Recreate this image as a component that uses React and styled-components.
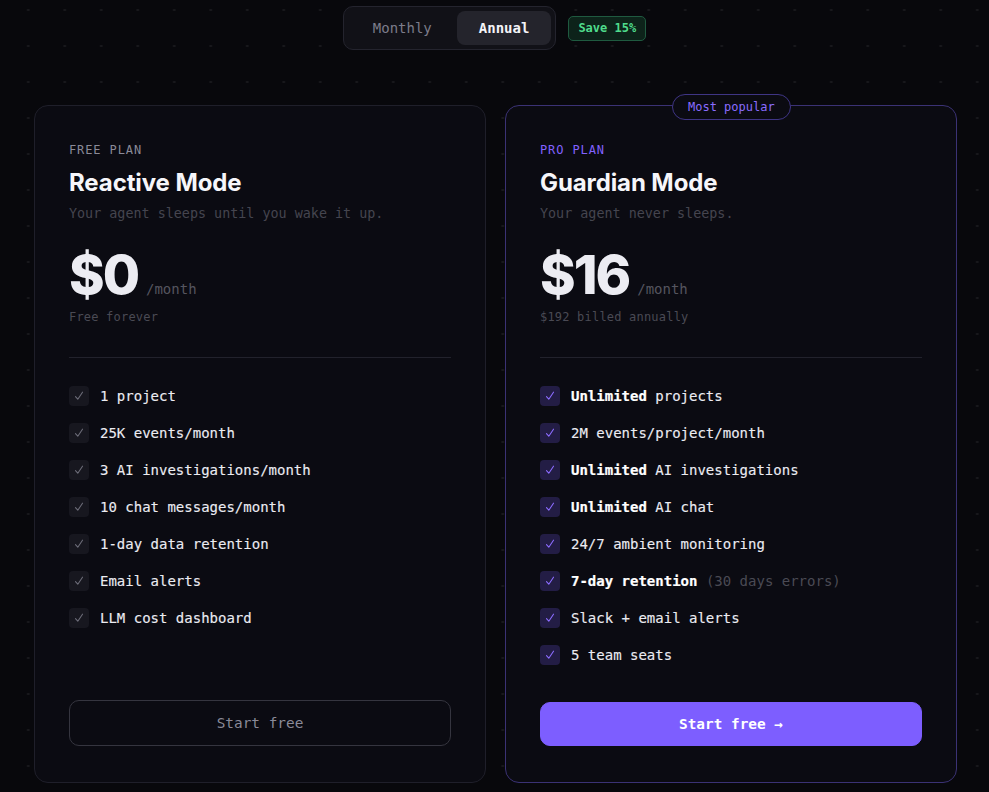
import styled, { createGlobalStyle } from 'styled-components';

const GlobalStyle = createGlobalStyle`
  html, body {
    margin: 0;
    padding: 0;
    background-color: #08080c;
  }
  body {
    min-height: 792px;
    background-image: radial-gradient(rgba(255, 255, 255, 0.07) 1px, transparent 1.4px);
    background-size: 36.5px 36px;
    background-position: 10px -8px;
    font-family: "DejaVu Sans Mono", "Liberation Mono", monospace;
    color: #e8e8f0;
  }
`;

const Page = styled.div`
  padding: 6px 0 0 2px;
  display: flex;
  flex-direction: column;
  align-items: center;
`;

const ToggleRow = styled.div`
  display: flex;
  align-items: center;
  gap: 12px;
  margin-left: -2px;
`;

const Toggle = styled.div`
  display: flex;
  padding: 4px;
  border: 1px solid #24242e;
  border-radius: 10px;
  background: #111117;
`;

const ToggleButton = styled.button`
  height: 34px;
  padding: 0 ${(p) => (p.$active ? '22px' : '25px')};
  border: 0;
  border-radius: 8px;
  background: ${(p) => (p.$active ? '#24242c' : 'transparent')};
  color: ${(p) => (p.$active ? '#f4f4f8' : '#7c7c8a')};
  font-family: inherit;
  font-size: 14px;
  font-weight: ${(p) => (p.$active ? 700 : 400)};
  cursor: pointer;
`;

const SaveBadge = styled.span`
  display: inline-flex;
  align-items: center;
  height: 23px;
  padding: 0 9px;
  border: 1px solid #1f5a40;
  border-radius: 5px;
  background: #0d231a;
  color: #4fdc8c;
  font-size: 12px;
  font-weight: 700;
`;

const Cards = styled.div`
  width: 923px;
  margin-top: 55px;
  display: grid;
  grid-template-columns: 1fr 1fr;
  gap: 19px;
`;

const Card = styled.div`
  position: relative;
  height: 678px;
  box-sizing: border-box;
  padding: 36px 34px 36px;
  border: 1px solid ${(p) => (p.$pro ? '#3b3275' : '#1f1f2a')};
  border-radius: 14px;
  background: #0b0b12;
  display: flex;
  flex-direction: column;
`;

const Popular = styled.span`
  position: absolute;
  top: -12px;
  left: 166px;
  height: 24px;
  padding: 0 15px;
  display: flex;
  align-items: center;
  border: 1px solid #3f3585;
  border-radius: 13px;
  background: #0b0b12;
  color: #8a6cff;
  font-size: 12px;
`;

const PlanLabel = styled.div`
  font-size: 12px;
  line-height: 16px;
  letter-spacing: 0.9px;
  color: ${(p) => (p.$pro ? '#8262ff' : '#8a8a98')};
`;

const Title = styled.h2`
  margin: 10px 0 0;
  font-family: Inter, "Liberation Sans", sans-serif;
  font-size: 24px;
  line-height: 30px;
  font-weight: 700;
  letter-spacing: -0.1px;
  color: #f6f6fa;
`;

const Subtitle = styled.p`
  margin: 7px 0 0;
  font-size: 13.4px;
  line-height: 18px;
  color: #45454f;
`;

const PriceRow = styled.div`
  margin-top: 23px;
  height: 58px;
  line-height: 58px;
  white-space: nowrap;
`;

const Amount = styled.span`
  font-family: Inter, "Liberation Sans", sans-serif;
  font-size: 54px;
  font-weight: 800;
  letter-spacing: -2px;
  color: #ececf2;
`;

const Per = styled.span`
  margin-left: 8px;
  font-size: 14px;
  line-height: 1;
  color: #55555f;
`;

const Note = styled.div`
  margin-top: 5px;
  font-size: 12px;
  line-height: 16px;
  letter-spacing: 0.2px;
  color: #4a4a54;
`;

const Divider = styled.hr`
  margin: 32px 0 0;
  border: 0;
  border-top: 1px solid #22222c;
`;

const Features = styled.ul`
  list-style: none;
  margin: 28px 0 0;
  padding: 0;
  display: flex;
  flex-direction: column;
  gap: 17px;
`;

const Feature = styled.li`
  display: flex;
  align-items: center;
  gap: 11px;
  font-size: 14px;
  line-height: 20px;
  color: #ececf2;
  -webkit-text-stroke: 0.12px currentColor;

  b {
    font-weight: 700;
    color: #ffffff;
    -webkit-text-stroke: 0.2px currentColor;
  }
`;

const Muted = styled.span`
  color: #4a4a54;
  -webkit-text-stroke: 0;
`;

const CheckBox = styled.span`
  width: 20px;
  height: 20px;
  flex: none;
  border-radius: 4px;
  background: ${(p) => (p.$pro ? '#231d45' : '#17171f')};
  display: flex;
  align-items: center;
  justify-content: center;
  color: ${(p) => (p.$pro ? '#8c6cff' : '#6c6c78')};
`;

const CtaButton = styled.button`
  margin-top: auto;
  height: ${(p) => (p.$pro ? '44px' : '46px')};
  border-radius: 10px;
  border: 1px solid ${(p) => (p.$pro ? '#7d5eff' : '#35353f')};
  background: ${(p) => (p.$pro ? '#7d5eff' : 'transparent')};
  color: ${(p) => (p.$pro ? '#ffffff' : '#8a8a98')};
  font-family: inherit;
  font-size: 14.4px;
  font-weight: ${(p) => (p.$pro ? 700 : 400)};
  cursor: pointer;
`;

const Check = ({ pro }) => (
  <CheckBox $pro={pro}>
    <svg width="10" height="10" viewBox="0 0 10 10" fill="none">
      <path d="M1.5 5.6 L3.8 8.2 L8.5 1.2" stroke="currentColor" strokeWidth="1.1" strokeLinecap="round" strokeLinejoin="round" />
    </svg>
  </CheckBox>
);

const plans = [
  {
    label: 'FREE PLAN',
    title: 'Reactive Mode',
    subtitle: 'Your agent sleeps until you wake it up.',
    amount: '$0',
    note: 'Free forever',
    features: [
      ['1 project'],
      ['25K events/month'],
      ['3 AI investigations/month'],
      ['10 chat messages/month'],
      ['1-day data retention'],
      ['Email alerts'],
      ['LLM cost dashboard'],
    ],
    cta: 'Start free',
  },
  {
    pro: true,
    label: 'PRO PLAN',
    title: 'Guardian Mode',
    subtitle: 'Your agent never sleeps.',
    amount: '$16',
    note: '$192 billed annually',
    features: [
      ['projects', 'Unlimited'],
      ['2M events/project/month'],
      ['AI investigations', 'Unlimited'],
      ['AI chat', 'Unlimited'],
      ['24/7 ambient monitoring'],
      ['7-day retention', null, '(30 days errors)'],
      ['Slack + email alerts'],
      ['5 team seats'],
    ],
    cta: 'Start free →',
  },
];

const PlanCard = ({ plan }) => (
  <Card $pro={plan.pro}>
    {plan.pro && <Popular>Most popular</Popular>}
    <PlanLabel $pro={plan.pro}>{plan.label}</PlanLabel>
    <Title>{plan.title}</Title>
    <Subtitle>{plan.subtitle}</Subtitle>
    <PriceRow>
      <Amount>{plan.amount}</Amount>
      <Per>/month</Per>
    </PriceRow>
    <Note>{plan.note}</Note>
    <Divider />
    <Features>
      {plan.features.map(([text, bold, muted]) => (
        <Feature key={text}>
          <Check pro={plan.pro} />
          <span>
            {bold && <b>{bold} </b>}
            {plan.pro && !bold && muted ? <b>{text}</b> : text}
            {muted && <Muted> {muted}</Muted>}
          </span>
        </Feature>
      ))}
    </Features>
    <CtaButton $pro={plan.pro}>{plan.cta}</CtaButton>
  </Card>
);

export default function App() {
  return (
    <>
      <GlobalStyle />
      <Page>
        <ToggleRow>
          <Toggle>
            <ToggleButton>Monthly</ToggleButton>
            <ToggleButton $active>Annual</ToggleButton>
          </Toggle>
          <SaveBadge>Save 15%</SaveBadge>
        </ToggleRow>
        <Cards>
          {plans.map((plan) => (
            <PlanCard key={plan.label} plan={plan} />
          ))}
        </Cards>
      </Page>
    </>
  );
}
